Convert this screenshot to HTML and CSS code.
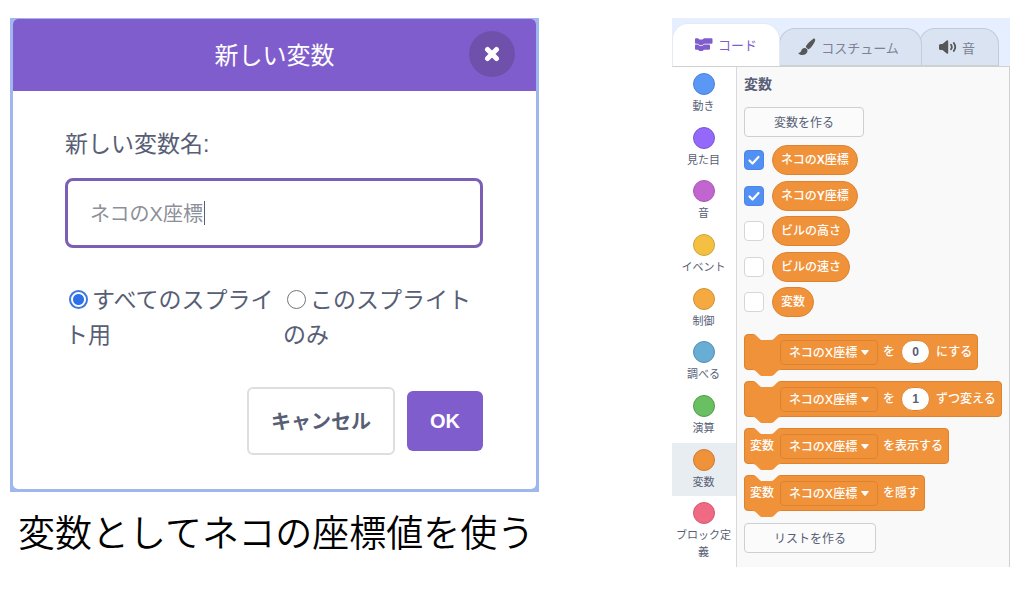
FILE: index.html
```html
<!DOCTYPE html>
<html lang="ja">
<head>
<meta charset="utf-8">
<title>新しい変数</title>
<link rel="stylesheet" href="styles.css">
</head>
<body>
<main class="page">
  <figure class="figure">
    <div class="frame">
      <form class="modal">
        <header class="modal-header">
          <h1 class="modal-title">新しい変数</h1>
          <button class="close" type="button" aria-label="閉じる">
            <svg viewBox="0 0 16 16" width="16" height="16"><path d="M3.500 3.500l9 9M12.500 3.500l-9 9" stroke="#fff" stroke-width="5" stroke-linecap="round"/></svg>
          </button>
        </header>
        <div class="modal-body">
          <label class="name-label" for="name">新しい変数名:</label>
          <div class="name-box">
            <input class="name-input" id="name" type="text" value="ネコのX座標">
            <span class="caret"></span>
          </div>
          <div class="scope">
            <label class="scope-option"><input class="radio" type="radio" name="scope" checked>すべてのスプライト用</label>
            <label class="scope-option"><input class="radio" type="radio" name="scope">このスプライトのみ</label>
          </div>
          <div class="actions">
            <button class="cancel" type="button">キャンセル</button>
            <button class="ok" type="button">OK</button>
          </div>
        </div>
      </form>
    </div>
    <figcaption class="caption">変数としてネコの座標値を使う</figcaption>
  </figure>

  <section class="editor">
    <nav class="tabs">
      <button class="tab tab-code" type="button">
        <svg viewBox="0 0 18 13" width="18" height="13" fill="currentColor"><path d="M1 .3h2L4.500 1.500h3L9 .3h7.500q1 0 1 1v3.500q0 1-1 1H9L7.500 7h-3L3 5.800H1q-1 0-1-1V1.300q0-1 1-1z"/><path d="M1 6.600h2L4.500 7.800h3L9 6.600h5q1 0 1 1v3.200q0 1-1 1H9L7.500 13h-3L3 11.800H1q-1 0-1-1V7.600q0-1 1-1z"/></svg>
        コード
      </button>
      <button class="tab tab-costume" type="button">
        <svg viewBox="0 0 18 18" width="18" height="18" fill="#575757"><path d="M16.600.7c.8.5.8 1.500.3 2.600-1.100 2.700-3.200 5.700-5.400 7.500-.6.5-1.300.4-1.900 0L8.300 9.600c-.6-.6-.6-1.200-.1-1.900C9.900 5.300 12.600 2.600 15 1c.6-.4 1.100-.6 1.600-.3z"/><path d="M6.700 10.100c1.800.1 3 1.400 2.800 3-.3 2.500-2.600 4-5.300 4-1.600 0-3.100-.6-3.700-1.500-.3-.5 0-.8.600-.8 1.500-.1 1.600-.9 2.200-2.200.6-1.500 1.700-2.600 3.400-2.500z"/></svg>
        コスチューム
      </button>
      <button class="tab tab-sound" type="button">
        <svg viewBox="0 0 18 14" width="18" height="14"><path d="M1.500 4h2L7.700.6Q9.200-.3 9.200 1.500v11q0 1.800-1.500.9L3.500 10h-2Q0 10 0 8.500v-3Q0 4 1.500 4z" fill="#575757"/><path d="M12 4.700q1.700 2.300 0 4.600M14.800 3q2.900 4 0 8" fill="none" stroke="#575757" stroke-width="1.800" stroke-linecap="round"/></svg>
        音
      </button>
    </nav>
    <div class="workspace">
      <ul class="categories">
        <li class="category"><span class="dot motion"></span>動き</li>
        <li class="category"><span class="dot looks"></span>見た目</li>
        <li class="category"><span class="dot sound"></span>音</li>
        <li class="category"><span class="dot events"></span>イベント</li>
        <li class="category"><span class="dot control"></span>制御</li>
        <li class="category"><span class="dot sensing"></span>調べる</li>
        <li class="category"><span class="dot operators"></span>演算</li>
        <li class="category selected"><span class="dot variables"></span>変数</li>
        <li class="category"><span class="dot custom"></span>ブロック定義</li>
      </ul>
      <div class="flyout">
        <h2 class="flyout-title">変数</h2>
        <button class="make make-variable" type="button">変数を作る</button>
        <div class="monitors">
          <label class="monitor"><input class="check" type="checkbox" checked><span class="pill">ネコの<b>X</b>座標</span></label>
          <label class="monitor"><input class="check" type="checkbox" checked><span class="pill">ネコの<b>Y</b>座標</span></label>
          <label class="monitor"><input class="check" type="checkbox"><span class="pill">ビルの高さ</span></label>
          <label class="monitor"><input class="check" type="checkbox"><span class="pill">ビルの速さ</span></label>
          <label class="monitor"><input class="check" type="checkbox"><span class="pill">変数</span></label>
        </div>
        <div class="blocks">
          <div class="block">
            <svg class="notch" viewBox="0 0 36 7"><path d="M0 0c1.500 0 2.500.8 3.200 1.500l3 3c.8.8 1.500 1.500 3 1.500h9c1.500 0 2.200-.8 3-1.500l3-3C25 .8 26 0 27.500 0z"/></svg>
            <svg class="bump" viewBox="0 0 36 8"><path d="M0 0v1c1.500 0 2.500.8 3.200 1.500l3 3c.8.8 1.500 1.500 3 1.500h9c1.500 0 2.200-.8 3-1.500l3-3C25 1.800 26 1 27.500 1V0z"/></svg>
            <span class="lead"></span>
            <span class="field"><select class="select" aria-label="変数"><option>ネコのX座標</option></select><svg class="arrow" viewBox="0 0 8 5"><path d="M1 0h6q1.400 0 .5 1L4.700 4.500q-.7.700-1.400 0L.5 1Q-.4 0 1 0z"/></svg></span>
            <span class="word">を</span>
            <input class="number" type="text" value="0" aria-label="値">
            <span class="word tail">にする</span>
          </div>
          <div class="block">
            <svg class="notch" viewBox="0 0 36 7"><path d="M0 0c1.500 0 2.500.8 3.200 1.500l3 3c.8.8 1.500 1.500 3 1.500h9c1.500 0 2.200-.8 3-1.500l3-3C25 .8 26 0 27.500 0z"/></svg>
            <svg class="bump" viewBox="0 0 36 8"><path d="M0 0v1c1.500 0 2.500.8 3.200 1.500l3 3c.8.8 1.500 1.500 3 1.500h9c1.500 0 2.200-.8 3-1.500l3-3C25 1.800 26 1 27.500 1V0z"/></svg>
            <span class="lead"></span>
            <span class="field"><select class="select" aria-label="変数"><option>ネコのX座標</option></select><svg class="arrow" viewBox="0 0 8 5"><path d="M1 0h6q1.400 0 .5 1L4.700 4.500q-.7.700-1.400 0L.5 1Q-.4 0 1 0z"/></svg></span>
            <span class="word">を</span>
            <input class="number" type="text" value="1" aria-label="値">
            <span class="word tail">ずつ変える</span>
          </div>
          <div class="block">
            <svg class="notch" viewBox="0 0 36 7"><path d="M0 0c1.500 0 2.500.8 3.200 1.500l3 3c.8.8 1.500 1.500 3 1.500h9c1.500 0 2.200-.8 3-1.500l3-3C25 .8 26 0 27.500 0z"/></svg>
            <svg class="bump" viewBox="0 0 36 8"><path d="M0 0v1c1.500 0 2.500.8 3.200 1.500l3 3c.8.8 1.500 1.500 3 1.500h9c1.500 0 2.200-.8 3-1.500l3-3C25 1.800 26 1 27.500 1V0z"/></svg>
            <span class="lead">変数</span>
            <span class="field"><select class="select" aria-label="変数"><option>ネコのX座標</option></select><svg class="arrow" viewBox="0 0 8 5"><path d="M1 0h6q1.400 0 .5 1L4.700 4.500q-.7.700-1.400 0L.5 1Q-.4 0 1 0z"/></svg></span>
            <span class="word">を表示する</span>
          </div>
          <div class="block">
            <svg class="notch" viewBox="0 0 36 7"><path d="M0 0c1.500 0 2.500.8 3.200 1.500l3 3c.8.8 1.500 1.500 3 1.500h9c1.500 0 2.200-.8 3-1.500l3-3C25 .8 26 0 27.500 0z"/></svg>
            <svg class="bump" viewBox="0 0 36 8"><path d="M0 0v1c1.500 0 2.500.8 3.200 1.500l3 3c.8.8 1.500 1.500 3 1.500h9c1.500 0 2.200-.8 3-1.500l3-3C25 1.800 26 1 27.500 1V0z"/></svg>
            <span class="lead">変数</span>
            <span class="field"><select class="select" aria-label="変数"><option>ネコのX座標</option></select><svg class="arrow" viewBox="0 0 8 5"><path d="M1 0h6q1.400 0 .5 1L4.700 4.500q-.7.700-1.400 0L.5 1Q-.4 0 1 0z"/></svg></span>
            <span class="word">を隠す</span>
          </div>
        </div>
        <button class="make make-list" type="button">リストを作る</button>
      </div>
    </div>
  </section>
</main>
</body>
</html>
```

FILE: styles.css
```css
* {
  box-sizing: border-box;
}

body {
  margin: 0;
  background: #fff;
  color: #575e75;
  font-family: "Liberation Sans", "Noto Sans CJK JP", sans-serif;
}

button,
input,
select {
  font-family: inherit;
  margin: 0;
}

svg {
  display: block;
  flex: none;
}

.page {
  display: grid;
  grid-template-columns: minmax(0, 529fr) minmax(0, 338fr);
  column-gap: 133px;
  align-items: start;
  padding: 18px 14px 0 10px;
}

/* Dialog */

.figure {
  margin: 0;
}

.frame {
  padding: 1px 3px 3px;
  background: #9fb7ee;
}

.modal {
  overflow: hidden;
  border-radius: 5px;
  background: #fff;
}

.modal-header {
  position: relative;
  display: flex;
  align-items: center;
  justify-content: center;
  height: 72px;
  padding-bottom: 4px;
  background: #805dcc;
}

.modal-title {
  margin: 0;
  color: #fff;
  font-size: 24px;
  font-weight: 400;
}

.close {
  position: absolute;
  top: 12px;
  right: 21px;
  display: flex;
  align-items: center;
  justify-content: center;
  width: 46px;
  height: 46px;
  padding: 0;
  border: 0;
  border-radius: 50%;
  background: #6f51ab;
}

.modal-body {
  padding: 36px 53px 34px 52px;
}

.name-label {
  display: block;
  font-size: 23px;
  line-height: 34px;
}

.name-box {
  position: relative;
  margin-top: 17px;
}

.name-input {
  display: block;
  width: 100%;
  height: 70px;
  padding: 0 22px 2px;
  border: 3px solid #7a5fb5;
  border-radius: 8px;
  outline: 0;
  background: #fff;
  color: #8d8f99;
  font-size: 20px;
}

.caret {
  position: absolute;
  top: 23px;
  left: 139px;
  width: 1px;
  height: 24px;
  background: #575e75;
}

.scope {
  display: grid;
  grid-template-columns: 218fr 200fr;
  margin-top: 35px;
  font-size: 23px;
  line-height: 35px;
}

.radio {
  appearance: none;
  width: 19px;
  height: 19px;
  margin: 0 4px;
  border: 1px solid #767676;
  border-radius: 50%;
  background: #fff;
  vertical-align: -1px;
}

.radio:checked {
  border: 2px solid #3b78e0;
  background: radial-gradient(circle, #2f6fe8 5px, #fff 6px);
}

.actions {
  display: flex;
  align-items: center;
  justify-content: flex-end;
  gap: 12px;
  margin-top: 34px;
}

.cancel,
.ok {
  border-radius: 6px;
  font-size: 20px;
  font-weight: 700;
}

.cancel {
  height: 68px;
  padding: 0 22px 2px;
  border: 2px solid #dedede;
  background: #fff;
  color: #575e75;
}

.ok {
  height: 60px;
  padding: 0 23px;
  border: 0;
  background: #805dcc;
  color: #fff;
}

.caption {
  margin-top: 16px;
  padding-left: 8px;
  color: #000;
  font-size: 37px;
  font-weight: 350;
  line-height: 54px;
  white-space: nowrap;
}

/* Editor */

.editor {
  border-right: 1px solid #d0d0d0;
}

.tabs {
  display: flex;
  align-items: flex-end;
  height: 48px;
  margin-right: -1px;
  background: #e5efff;
}

.tab {
  position: relative;
  display: flex;
  align-items: center;
  justify-content: center;
  gap: 5px;
  height: 38px;
  padding: 0 4px 0 0;
  border: 1px solid #c3cad8;
  border-bottom-color: #d0d0d0;
  border-radius: 16px 16px 0 0;
  background: #d9e3f2;
  color: #7c8193;
  font-size: 13px;
  white-space: nowrap;
}

.tab-code {
  z-index: 2;
  flex: 0 0 108px;
  height: 43px;
  padding: 0;
  border-color: #e4e9f2;
  border-bottom-color: #fff;
  background: #fff;
  color: #805dcc;
}

.tab-costume {
  z-index: 1;
  flex: 0 0 143px;
  margin-left: -1px;
}

.tab-sound {
  flex: 0 0 80px;
  margin-left: -3px;
}

.workspace {
  display: flex;
  border-top: 1px solid #d0d0d0;
}

.categories {
  display: flex;
  flex: 0 0 65px;
  flex-direction: column;
  margin: 0;
  padding: 0;
  border-right: 1px solid #d9d9d9;
  list-style: none;
}

.category {
  display: flex;
  flex: 1 1 auto;
  flex-direction: column;
  align-items: center;
  gap: 3px;
  padding: 6px 4px 0 3px;
  font-size: 11px;
  line-height: 17px;
  text-align: center;
}

.selected {
  background: #e8edf1;
}

.dot {
  flex: none;
  width: 22px;
  height: 22px;
  border: 1px solid;
  border-radius: 50%;
}

.motion { background: #5b97f5; border-color: #4880d8; }
.looks { background: #9468fb; border-color: #7855d6; }
.sound { background: #c266cf; border-color: #a855b6; }
.events { background: #f4c042; border-color: #cfa139; }
.control { background: #f4aa40; border-color: #cf9038; }
.sensing { background: #68aed4; border-color: #4d8fb3; }
.operators { background: #6abf62; border-color: #4f9c48; }
.variables { background: #f0923a; border-color: #cf7a2c; }
.custom { background: #f06a83; border-color: #d2566e; }

.flyout {
  flex: 1;
  min-width: 0;
  padding: 7px 7px 14px;
  background: #f9f9f9;
}

.flyout-title {
  margin: 0;
  font-size: 14px;
  line-height: 20px;
}

.make {
  display: block;
  height: 30px;
  padding: 0 29px 1px;
  border: 1px solid #cfcfd2;
  border-radius: 4px;
  background: #fbfbfb;
  color: #575e75;
  font-size: 12px;
}

.make-variable {
  margin-top: 13px;
}

.monitors {
  display: grid;
  align-content: space-between;
  min-height: 172px;
  margin-top: 8px;
}

.monitor {
  display: flex;
  align-items: center;
  gap: 8px;
}

.check {
  appearance: none;
  width: 20px;
  height: 20px;
  border: 1px solid #d6d6d8;
  border-radius: 4px;
  background: #fff;
}

.check:checked {
  border-color: #4a86e8;
  background: #5390f4 url("data:image/svg+xml,%3Csvg xmlns='http://www.w3.org/2000/svg' viewBox='0 0 18 18'%3E%3Cpath d='M4.500 9.500l3 3 6-6.500' fill='none' stroke='%23fff' stroke-width='2.200' stroke-linecap='round' stroke-linejoin='round'/%3E%3C/svg%3E") center / 18px no-repeat;
}

.pill {
  padding: 0 8px;
  border: 1px solid #dd8330;
  border-radius: 16px;
  background: #f0923a;
  color: #fff;
  font-size: 12px;
  font-weight: 500;
  line-height: 28px;
}

.blocks {
  display: flex;
  flex-direction: column;
  align-items: flex-start;
  gap: 11px;
  margin-top: 17px;
}

.block {
  position: relative;
  display: flex;
  align-items: center;
  height: 36px;
  padding: 0 5px;
  border: 1px solid #dd8330;
  border-radius: 4px;
  background: #f0923a;
  color: #fff;
  font-size: 12px;
  font-weight: 500;
  line-height: 16px;
  white-space: nowrap;
}

.notch,
.bump {
  position: absolute;
  left: 8px;
  width: 36px;
}

.notch {
  top: -1px;
  height: 7px;
  fill: #f9f9f9;
}

.bump {
  bottom: -8px;
  height: 8px;
  fill: #f0923a;
}

.lead {
  width: 30px;
}

.field {
  position: relative;
  margin-right: 5px;
}

.select {
  display: block;
  appearance: none;
  width: 98px;
  height: 25px;
  padding: 0 8px;
  border: 1px solid #dd8330;
  border-radius: 4px;
  background: transparent;
  color: #fff;
  font-family: Inter, "Noto Sans CJK JP", sans-serif;
  font-size: 12px;
  font-weight: 500;
}

.arrow {
  position: absolute;
  top: 10px;
  right: 9px;
  width: 8px;
  height: 5px;
  fill: #fff;
  pointer-events: none;
}

.number {
  width: 29px;
  height: 24px;
  margin-left: 6px;
  padding: 0;
  border: 1px solid #dd8330;
  border-radius: 12px;
  background: #fff;
  color: #575e75;
  font-size: 12px;
  font-weight: 700;
  text-align: center;
}

.tail {
  margin-left: 6px;
}

.make-list {
  margin-top: 12px;
}
```
